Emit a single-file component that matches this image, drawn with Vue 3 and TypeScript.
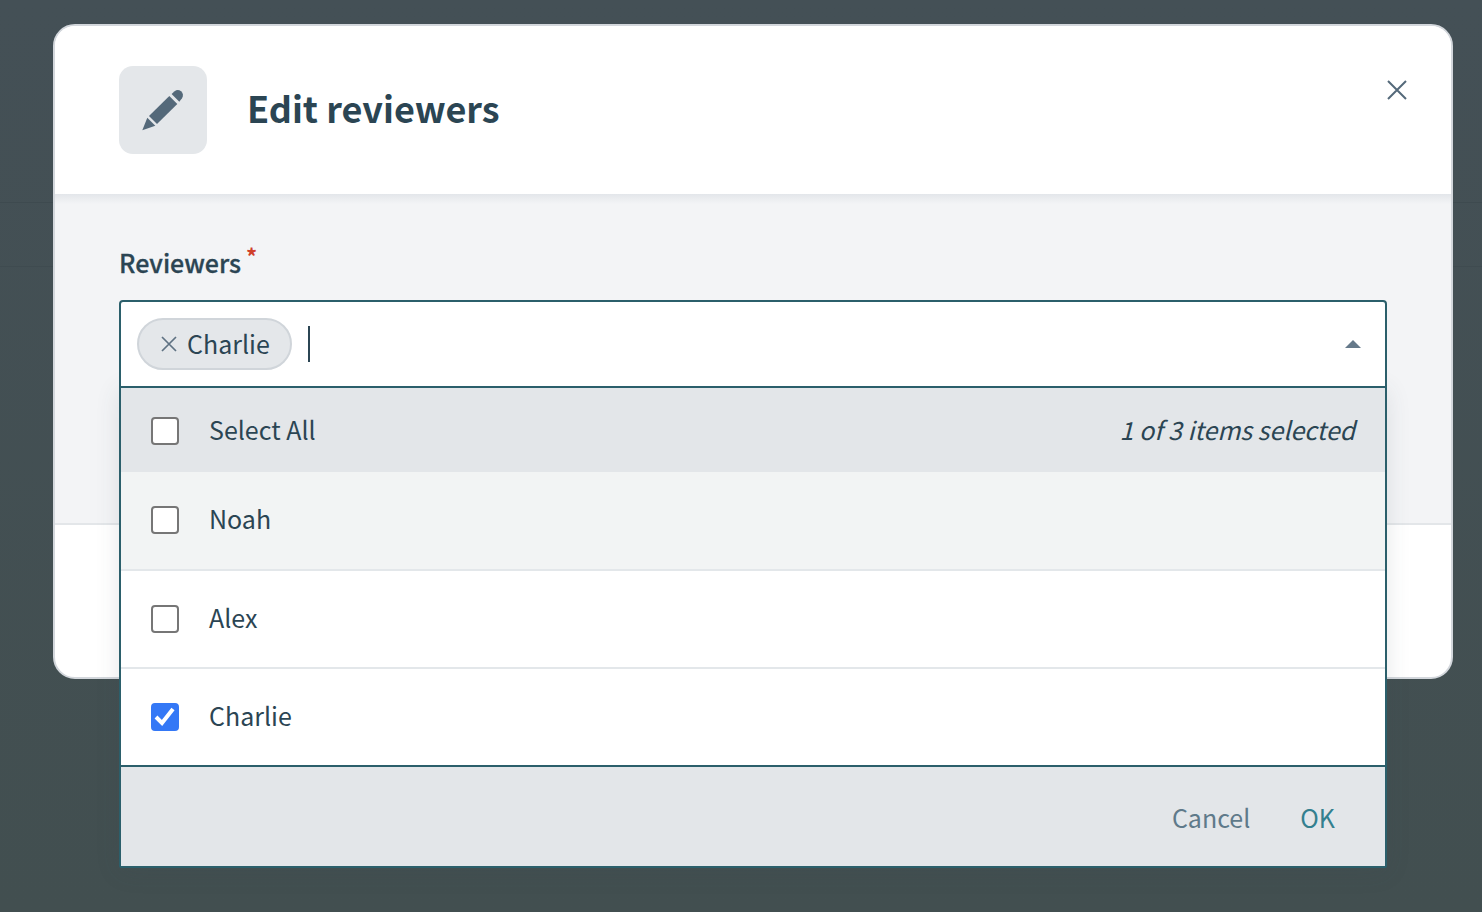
<template>
  <div class="page">
    <div class="modal">
      <header class="modal-header">
        <div class="icon-box">
          <svg width="46" height="44" viewBox="140 88 46 44" fill="#54697a">
            <path d="M142.3 130.3 147.3 117.7 155.3 125.7Z" />
            <path d="M149 116 169.3 96 177.3 104 157 124Z" />
            <path d="M171.6 94 174.6 91.2C176.6 89.6 179 89.6 181 91.3 183.2 93.2 183.6 96 182 98.2L179.3 101.8Z" />
          </svg>
        </div>
        <h1 class="title">Edit reviewers</h1>
        <button class="close" aria-label="Close">
          <svg width="20" height="20" viewBox="0 0 20 20" stroke="#54697a" stroke-width="2" fill="none">
            <path d="M1 1 19 19M19 1 1 19" />
          </svg>
        </button>
      </header>

      <div class="modal-body">
        <label class="field-label">Reviewers<span class="required">*</span></label>
        <div class="select">
          <div class="select-input">
            <span v-for="name in selectedNames" :key="name" class="chip">
              <svg width="16" height="16" viewBox="0 0 16 16" stroke="#5f7283" stroke-width="1.7" fill="none">
                <path d="M1 1 15 15M15 1 1 15" />
              </svg>
              {{ name }}
            </span>
            <span class="cursor"></span>
            <span class="caret"></span>
          </div>

          <div class="menu">
            <div class="menu-head">
              <span class="check"></span>
              <span class="option-name">Select All</span>
              <span class="count">{{ selectedNames.length }} of {{ options.length }} items selected</span>
            </div>
            <div
              v-for="option in options"
              :key="option.name"
              class="option"
              :class="{ hovered: option.hovered }"
            >
              <span class="check" :class="{ checked: option.checked }">
                <svg v-if="option.checked" width="24" height="24" viewBox="0 0 24 24" stroke="#fff" stroke-width="4" fill="none">
                  <path d="M3 12 9 18 20 4" />
                </svg>
              </span>
              <span class="option-name">{{ option.name }}</span>
            </div>
            <div class="menu-foot">
              <button class="text-btn cancel">Cancel</button>
              <button class="text-btn ok">OK</button>
            </div>
          </div>
        </div>
      </div>

      <footer class="modal-footer"></footer>
    </div>
  </div>
</template>

<script setup lang="ts">
import { computed, ref } from 'vue'

interface Option {
  name: string
  checked: boolean
  hovered?: boolean
}

const options = ref<Option[]>([
  { name: 'Noah', checked: false, hovered: true },
  { name: 'Alex', checked: false },
  { name: 'Charlie', checked: true },
])

const selectedNames = computed(() => options.value.filter((o) => o.checked).map((o) => o.name))
</script>

<style>
html,
body {
  margin: 0;
  background: #424f53;
}
</style>

<style scoped>
.page {
  box-sizing: border-box;
  height: 912px;
  padding: 24px 0 0 53px;
  overflow: hidden;
  font-family: 'Noto Sans CJK SC', 'Open Sans', sans-serif;
  color: #2b4553;
  background:
    linear-gradient(#3e4a4f, #3e4a4f) 0 202px / 100% 1px no-repeat,
    linear-gradient(#3f4b50, #3f4b50) 0 266px / 100% 1px no-repeat,
    linear-gradient(#445056, #424f50);
}

.modal {
  box-sizing: border-box;
  width: 1400px;
  height: 655px;
  display: flex;
  flex-direction: column;
  background: #fff;
  border: 2px solid #d3d7dc;
  border-radius: 22px;
}

.modal-header {
  position: relative;
  height: 168px;
  flex: none;
  box-sizing: border-box;
  display: flex;
  align-items: center;
  gap: 40px;
  padding: 0 64px;
  border-radius: 20px 20px 0 0;
  background: #fff;
}

.icon-box {
  width: 88px;
  height: 88px;
  border-radius: 14px;
  background: #e4e7ea;
  display: flex;
  align-items: center;
  justify-content: center;
}

.title {
  margin: -6px 0 0;
  font-size: 36px;
  line-height: 48px;
  font-weight: 700;
}

.close {
  position: absolute;
  top: 54px;
  right: 44px;
  padding: 0;
  height: 20px;
  border: none;
  background: none;
}

.modal-body {
  height: 331px;
  flex: none;
  box-sizing: border-box;
  padding: 48px 64px 0;
  background: linear-gradient(#e3e6ea, #f3f4f6 10px);
  border-bottom: 2px solid #e3e6e9;
}

.field-label {
  display: block;
  height: 58px;
  font-size: 25px;
  line-height: 40px;
  font-weight: 500;
  -webkit-text-stroke: 0.3px #2b4553;
}

.required {
  position: relative;
  top: -8px;
  margin-left: 5px;
  font-size: 22px;
  font-weight: 700;
  line-height: 1;
  color: #d0402a;
  -webkit-text-stroke: 0;
}

.select {
  position: relative;
  width: 1268px;
}

.select-input {
  position: relative;
  z-index: 1;
  box-sizing: border-box;
  height: 88px;
  display: flex;
  align-items: center;
  padding: 0 24px 0 16px;
  background: #fff;
  border: 2px solid #2b5f6b;
  border-radius: 4px 4px 0 0;
}

.chip {
  box-sizing: border-box;
  height: 52px;
  display: flex;
  align-items: center;
  gap: 10px;
  padding: 0 20px 2px 22px;
  font-size: 25px;
  background: #e4e7ea;
  border: 2px solid #d0d5da;
  border-radius: 26px;
}

.chip svg {
  margin-top: 2px;
}

.cursor {
  width: 2px;
  height: 36px;
  margin-left: 16px;
  background: #2b4553;
}

.caret {
  margin-left: auto;
  width: 0;
  height: 0;
  border-left: 8px solid transparent;
  border-right: 8px solid transparent;
  border-bottom: 8px solid #65798a;
}

/* list hangs over the modal edge */
.menu {
  position: absolute;
  top: 86px;
  left: 0;
  right: 0;
  box-sizing: border-box;
  background: #fff;
  border: 2px solid #2b5f6b;
  border-radius: 0 0 2px 2px;
  box-shadow: 0 4px 24px rgba(60, 70, 80, 0.12);
}

.menu-head,
.option {
  display: flex;
  align-items: center;
  gap: 30px;
  padding: 0 30px;
  font-size: 25px;
}

.menu-head {
  box-sizing: border-box;
  height: 84px;
  padding-top: 2px;
  background: #e3e6e9;
}

.option {
  height: 96px;
  border-bottom: 2px solid #e3e7ea;
}

.option:nth-last-child(2) {
  border-bottom: none;
}

.option.hovered {
  padding-bottom: 1px;
  background: #f2f4f4;
}

.option-name,
.count {
  margin-top: -4px;
}

.check {
  box-sizing: border-box;
  flex: none;
  width: 28px;
  height: 28px;
  display: flex;
  align-items: center;
  justify-content: center;
  background: #fff;
  border: 2px solid #767676;
  border-radius: 4px;
}

.check.checked {
  background: #3478f6;
  border-color: #3478f6;
}

.count {
  margin-left: auto;
  font-style: italic;
}

.menu-foot {
  box-sizing: border-box;
  height: 101px;
  display: flex;
  align-items: center;
  justify-content: flex-end;
  gap: 50px;
  padding: 0 50px 0 0;
  background: #e3e6e9;
  border-top: 2px solid #2b5f6b;
}

.text-btn {
  padding: 0;
  border: none;
  background: none;
  font-family: inherit;
  font-size: 25px;
}

.cancel {
  color: #5f7a8a;
}

.ok {
  color: #33808f;
}

.modal-footer {
  flex: 1;
  border-radius: 0 0 20px 20px;
}
</style>
